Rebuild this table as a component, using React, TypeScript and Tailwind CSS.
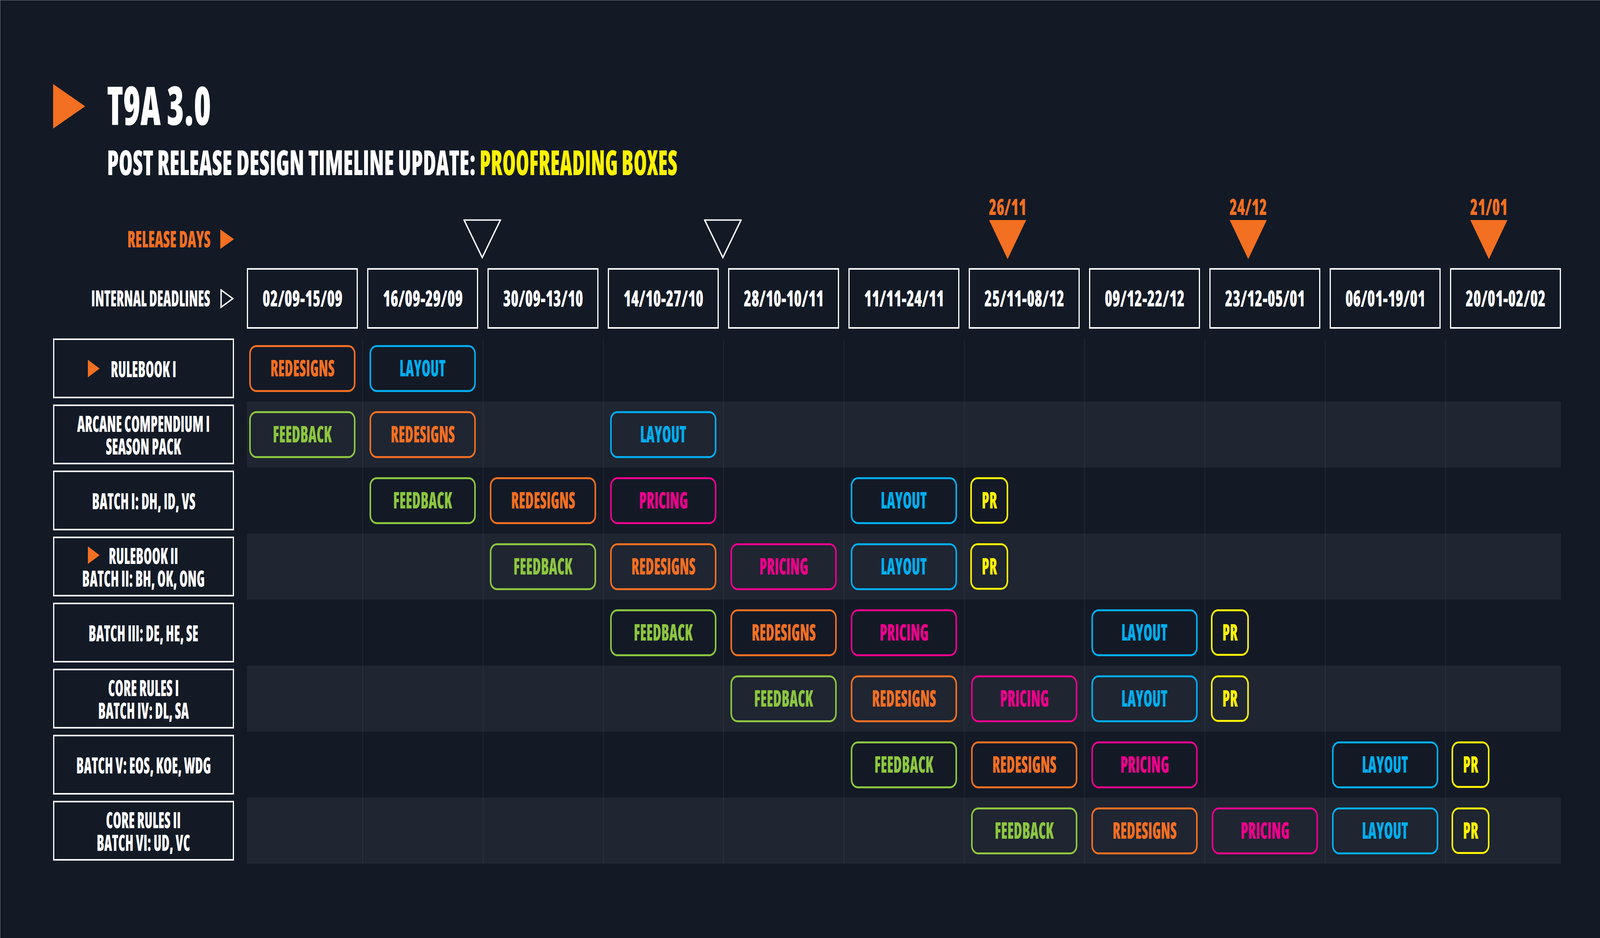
import React from 'react';

type Kind = 'REDESIGNS' | 'LAYOUT' | 'FEEDBACK' | 'PRICING' | 'PR';

interface TimelineRow {
  lines: string[];
  mark?: boolean;
  tasks: Record<number, Kind>;
}

// horizontal squash on top of the condensed face to reach the narrow display look
const SQ_CAPS = 'scale-x-[0.635]';
const SQ_RELEASE = 'scale-x-[0.64]';
const SQ_DEADLINE = 'scale-x-[0.615]';
const SQ_LABEL = 'scale-x-[0.61]';
const SQ_DIGITS = 'scale-x-[0.7]';
const SQ_TITLE = 'scale-x-[0.66]';
const SQ_SUB = 'scale-x-[0.655]';

const KIND_CLASS: Record<Kind, string> = {
  REDESIGNS: 'border-[#f36f21] text-[#f36f21]',
  LAYOUT: 'border-[#00aeef] text-[#00aeef]',
  FEEDBACK: 'border-[#8dc63f] text-[#8dc63f]',
  PRICING: 'border-[#ec008c] text-[#ec008c]',
  PR: 'border-[#fff200] text-[#fff200]',
};

const PERIODS = [
  '02/09-15/09',
  '16/09-29/09',
  '30/09-13/10',
  '14/10-27/10',
  '28/10-10/11',
  '11/11-24/11',
  '25/11-08/12',
  '09/12-22/12',
  '23/12-05/01',
  '06/01-19/01',
  '20/01-02/02',
];

const COLS = PERIODS.map((_, i) => i + 1);

const RELEASES: Record<number, string> = { 7: '26/11', 9: '24/12', 11: '21/01' };
const OPEN_MARKS = [3, 5];

const ROWS: TimelineRow[] = [
  { lines: ['RULEBOOK I'], mark: true, tasks: { 1: 'REDESIGNS', 2: 'LAYOUT' } },
  {
    lines: ['ARCANE COMPENDIUM I', 'SEASON PACK'],
    tasks: { 1: 'FEEDBACK', 2: 'REDESIGNS', 4: 'LAYOUT' },
  },
  {
    lines: ['BATCH I: DH, ID, VS'],
    tasks: { 2: 'FEEDBACK', 3: 'REDESIGNS', 4: 'PRICING', 6: 'LAYOUT', 7: 'PR' },
  },
  {
    lines: ['RULEBOOK II', 'BATCH II: BH, OK, ONG'],
    mark: true,
    tasks: { 3: 'FEEDBACK', 4: 'REDESIGNS', 5: 'PRICING', 6: 'LAYOUT', 7: 'PR' },
  },
  {
    lines: ['BATCH III: DE, HE, SE'],
    tasks: { 4: 'FEEDBACK', 5: 'REDESIGNS', 6: 'PRICING', 8: 'LAYOUT', 9: 'PR' },
  },
  {
    lines: ['CORE RULES I', 'BATCH IV: DL, SA'],
    tasks: { 5: 'FEEDBACK', 6: 'REDESIGNS', 7: 'PRICING', 8: 'LAYOUT', 9: 'PR' },
  },
  {
    lines: ['BATCH V: EOS, KOE, WDG'],
    tasks: { 6: 'FEEDBACK', 7: 'REDESIGNS', 8: 'PRICING', 10: 'LAYOUT', 11: 'PR' },
  },
  {
    lines: ['CORE RULES II', 'BATCH VI: UD, VC'],
    tasks: { 7: 'FEEDBACK', 8: 'REDESIGNS', 9: 'PRICING', 10: 'LAYOUT', 11: 'PR' },
  },
];

const Sq: React.FC<{ className: string; children: React.ReactNode }> = ({ className, children }) => (
  <span className={`inline-block whitespace-nowrap ${className}`}>{children}</span>
);

const TriRight: React.FC<{ w: number; h: number; className?: string }> = ({ w, h, className }) => (
  <svg width={w} height={h} viewBox={`0 0 ${w} ${h}`} className={`shrink-0 ${className ?? ''}`}>
    <polygon points={`0,0 ${w},${h / 2} 0,${h}`} fill="#f36f21" />
  </svg>
);

const TriRightOutline: React.FC<{ className?: string }> = ({ className }) => (
  <svg width={35} height={50} viewBox="0 0 35 50" className={`shrink-0 ${className ?? ''}`}>
    <polygon points="2,3 32,25 2,47" fill="none" stroke="#ffffff" strokeWidth={3.5} />
  </svg>
);

const OpenDown: React.FC<{ className?: string }> = ({ className }) => (
  <svg width={97} height={102} viewBox="0 0 97 102" className={`shrink-0 ${className ?? ''}`}>
    <polygon points="2,2 95,2 48.5,98" fill="none" stroke="#ffffff" strokeWidth={3.5} />
  </svg>
);

const FillDown: React.FC<{ className?: string }> = ({ className }) => (
  <svg width={95} height={100} viewBox="0 0 95 100" className={`shrink-0 ${className ?? ''}`}>
    <polygon points="0,0 95,0 47.5,100" fill="#f36f21" />
  </svg>
);

const Task: React.FC<{ kind: Kind }> = ({ kind }) => {
  const small = kind === 'PR';
  return (
    <div
      className={`flex shrink-0 items-center justify-center rounded-[18px/22px] border-x-4 border-y-[5px] ${KIND_CLASS[kind]} ${
        small ? 'ml-[4px] h-[119px] w-[97px]' : 'ml-[6px] h-[120px] w-[272px]'
      }`}
    >
      <Sq className={`mb-[3px] text-[58px] leading-none ${SQ_CAPS}`}>{kind}</Sq>
    </div>
  );
};

export default function App() {
  return (
    <div className="h-[2400px] w-[4096px] overflow-hidden border-l border-t border-[#7d828a] bg-[#131a26] pl-[135px] pt-[211px] font-['Open_Sans',Arial,sans-serif] font-extrabold text-white [font-stretch:condensed]">
      {/* title */}
      <div className="flex h-[120px] items-center">
        <TriRight w={82} h={114} />
        <Sq className={`mb-[8px] ml-[56px] origin-left text-[136px] leading-none ${SQ_TITLE}`}>T9A 3.0</Sq>
      </div>
      <div className="mt-[40px] flex h-[89px] items-center pl-[138px]">
        <Sq className={`mb-[5px] origin-left text-[88px] leading-none ${SQ_SUB}`}>
          POST RELEASE DESIGN TIMELINE UPDATE:{' '}
          <Sq className="origin-left scale-x-[0.955] text-[#fff200]">PROOFREADING BOXES</Sq>
        </Sq>
      </div>

      {/* release days */}
      <div className="mt-[34px] flex h-[171px] items-end pb-[3px]">
        <div className="flex h-[102px] w-[463px] shrink-0 items-center justify-end">
          <Sq className={`mb-[3px] origin-right text-[59px] leading-none text-[#f36f21] ${SQ_RELEASE}`}>RELEASE DAYS</Sq>
          <TriRight w={35} h={50} className="ml-[25px]" />
        </div>
        <div className="w-[33px] shrink-0" />
        <div className="flex gap-x-[24px]">
          {COLS.map((c) => (
            <div key={c} className="flex w-[284px] shrink-0 items-end">
              {OPEN_MARKS.includes(c) && <OpenDown className="-ml-[62px]" />}
              {RELEASES[c] && (
                <div className="ml-[52px] flex w-[95px] flex-col items-center">
                  <Sq className={`text-[57px] leading-none text-[#f36f21] ${SQ_DIGITS}`}>{RELEASES[c]}</Sq>
                  <FillDown className="mt-[6px]" />
                </div>
              )}
            </div>
          ))}
        </div>
      </div>

      {/* internal deadlines */}
      <div className="mt-[20px] flex h-[155px]">
        <div className="flex w-[463px] shrink-0 items-center justify-end">
          <Sq className={`mb-[3px] origin-right text-[57px] leading-none ${SQ_DEADLINE}`}>INTERNAL DEADLINES</Sq>
          <TriRightOutline className="ml-[26px]" />
        </div>
        <div className="w-[33px] shrink-0" />
        <div className="flex gap-x-[24px]">
          {PERIODS.map((p) => (
            <div
              key={p}
              className="flex w-[284px] shrink-0 items-center justify-center border-x-[3px] border-y-4 border-white"
            >
              <Sq className={`mb-[3px] text-[57px] leading-none ${SQ_DIGITS}`}>{p}</Sq>
            </div>
          ))}
        </div>
      </div>

      {/* grid */}
      <div className="mt-[17px] flex flex-col">
        {ROWS.map((row, r) => (
          <div key={r} className="flex h-[169px]">
            <div className="w-[463px] shrink-0 py-[8px]">
              <div className="relative flex h-full items-center justify-center border-x-[3px] border-y-4 border-white">
                {row.mark && (
                  <TriRight
                    w={30}
                    h={45}
                    className={`absolute left-[86px] ${row.lines.length > 1 ? 'top-[21px]' : 'top-1/2 -translate-y-1/2'}`}
                  />
                )}
                <Sq className={`text-center text-[57px] leading-[58px] ${SQ_LABEL}`}>
                  {row.lines.map((l) => (
                    <div key={l}>{l}</div>
                  ))}
                </Sq>
              </div>
            </div>
            <div className="w-[33px] shrink-0" />
            <div className={`flex ${r % 2 === 1 ? 'bg-[#1f2531]' : ''}`}>
              {COLS.map((c) => (
                <React.Fragment key={c}>
                  {c > 1 && (
                    <div className={`flex w-[24px] shrink-0 justify-center ${r === 0 ? 'pt-[9px]' : ''}`}>
                      <div className="w-[3px] bg-white/[0.04]" />
                    </div>
                  )}
                  <div className="flex w-[284px] shrink-0 items-center">
                    {row.tasks[c] && <Task kind={row.tasks[c]} />}
                  </div>
                </React.Fragment>
              ))}
            </div>
          </div>
        ))}
      </div>
    </div>
  );
}
